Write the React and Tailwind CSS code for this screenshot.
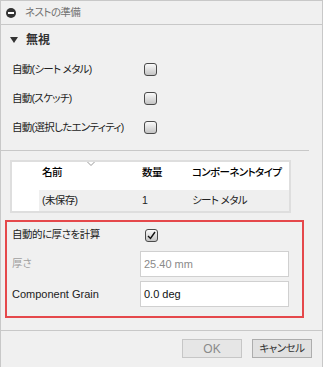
import React from 'react';

const font = { fontFamily: '"Liberation Sans", "Noto Sans CJK JP", sans-serif' };

function Checkbox({ checked }) {
  return (
    <div className="w-[13px] h-[13px] rounded-[3px] border border-[#4a4a4a] bg-gradient-to-b from-[#fafafa] to-[#c4c4c4] flex items-center justify-center shrink-0">
      {checked && (
        <svg width="11" height="11" viewBox="0 0 11 11">
          <path d="M2 6 L4.5 8.5 L9 2" fill="none" stroke="#111" strokeWidth="1.4" />
        </svg>
      )}
    </div>
  );
}

function OptionRow({ label }) {
  return (
    <div className="h-[29px] flex items-center pl-[11px]">
      <div className="w-[132px] shrink-0 text-[10.5px] tracking-[-0.7px] text-[#222] whitespace-nowrap">{label}</div>
      <Checkbox />
    </div>
  );
}

export default function App() {
  return (
    <div
      style={font}
      className="w-[323px] h-[367px] bg-[#f0f0f0] border-t border-l border-r border-[#c8c8c8] flex flex-col overflow-hidden [font-feature-settings:'palt']"
    >
      {/* Header */}
      <div className="h-[24px] border-b border-[#c8c8c8] flex items-center pl-[5px] shrink-0">
        <div className="w-[10px] h-[10px] rounded-full bg-[#333] flex items-center justify-center">
          <div className="w-[6px] h-[2px] bg-white" />
        </div>
        <span className="ml-[9px] text-[10.5px] tracking-[-0.6px] text-[#707070]">ネストの準備</span>
      </div>

      {/* 無視 */}
      <div className="h-[30px] flex items-center pl-[9px] shrink-0">
        <svg width="8" height="6" viewBox="0 0 8 6">
          <path d="M0 0 L8 0 L4 6 Z" fill="#333" />
        </svg>
        <span className="ml-[8px] text-[12px] font-bold text-[#333]">無視</span>
      </div>

      <OptionRow label="自動(シート メタル)" />
      <OptionRow label="自動(スケッチ)" />
      <OptionRow label="自動(選択したエンティティ)" />

      <div className="mt-[8px] h-px w-[308px] bg-[#c8c8c8] shrink-0" />

      {/* Table */}
      <div className="mt-[9px] ml-[9px] w-[281px] h-[53px] border-2 border-[#dedede] bg-white shrink-0 relative text-[10.5px] tracking-[-0.6px]">
        <svg className="absolute left-[75px] top-0" width="8" height="4" viewBox="0 0 8 4">
          <path d="M0.5 0 L4 3.5 L7.5 0" fill="none" stroke="#999" strokeWidth="1" />
        </svg>
        <div className="h-[28px] flex pt-[2px] text-black font-medium">
          <div className="w-[27px] shrink-0" />
          <div className="w-[100px] shrink-0 pl-[3px] leading-[16px]">名前</div>
          <div className="w-[50px] shrink-0 pl-[3px] leading-[16px]">数量</div>
          <div className="flex-1 pl-[3px] leading-[16px] whitespace-nowrap">コンポーネントタイプ</div>
        </div>
        <div className="h-[21px] flex">
          <div className="w-[27px] shrink-0" />
          <div className="flex-1 flex items-center bg-[#efefef] text-[#222]">
            <div className="w-[100px] shrink-0 pl-[3px]">(未保存)</div>
            <div className="w-[50px] shrink-0 pl-[3px]">1</div>
            <div className="flex-1 pl-[3px] whitespace-nowrap">シート メタル</div>
          </div>
        </div>
      </div>

      {/* Highlighted box */}
      <div className="mt-[7px] ml-[4px] w-[299px] h-[98px] border-2 border-[#e5484b] shrink-0 pl-[5px]">
        <div className="h-[26px] flex items-center">
          <div className="w-[133px] shrink-0 text-[10.5px] tracking-[-0.5px] text-[#222]">自動的に厚さを計算</div>
          <Checkbox checked />
        </div>
        <div className="mt-[3px] h-[26px] flex items-center">
          <div className="w-[128px] shrink-0 text-[10.5px] text-[#a0a0a0]">厚さ</div>
          <div className="w-[149px] h-[26px] border border-[#d0d0d0] bg-white flex items-center pl-[3px] text-[11px] text-[#8a8a8a]">
            25.40 mm
          </div>
        </div>
        <div className="mt-[4px] h-[26px] flex items-center">
          <div className="w-[128px] shrink-0 text-[11px] text-[#222]">Component Grain</div>
          <div className="w-[149px] h-[26px] border border-[#d0d0d0] bg-white flex items-center pl-[3px] text-[11px] text-[#111]">
            0.0 deg
          </div>
        </div>
      </div>

      {/* Footer */}
      <div className="mt-[12px] h-px bg-[#c8c8c8] shrink-0" />
      <div className="mt-[8px] flex justify-end gap-[10px] pr-[10px]">
        <button className="w-[60px] h-[19px] border border-[#c6c6c6] bg-[#e6e6e6] text-[12px] text-[#8a8a8a] leading-none">
          OK
        </button>
        <button className="w-[60px] h-[19px] border border-[#adadad] bg-[#e1e1e1] text-[10.5px] tracking-[-0.5px] text-[#333] leading-none">
          キャンセル
        </button>
      </div>
    </div>
  );
}
